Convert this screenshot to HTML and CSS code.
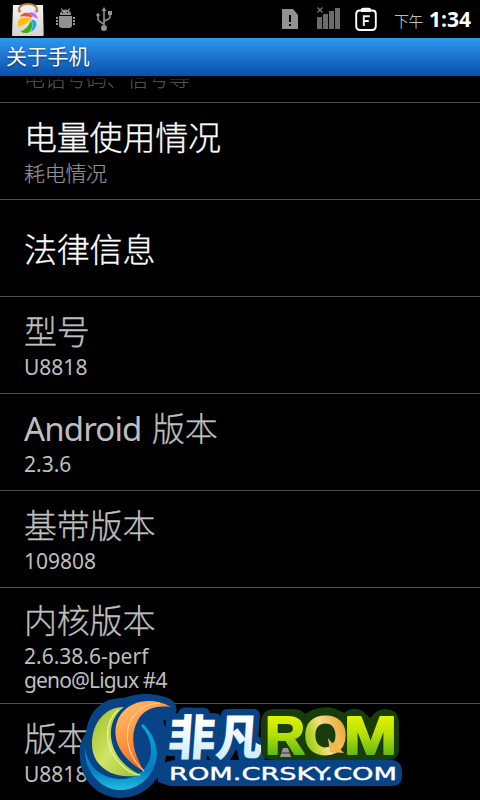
FILE: index.html
```html
<!DOCTYPE html>
<html lang="zh-CN">
<head>
<meta charset="utf-8">
<title>关于手机</title>
<link rel="stylesheet" href="styles.css">
</head>
<body>
<div class="phone">
  <header class="status">
    <svg class="status-icons" width="390" height="38" viewBox="0 0 390 38">
      <defs>
        <linearGradient id="bag" x1="0" y1="0" x2="0" y2="1"><stop offset="0" stop-color="#f2f2f2"/><stop offset="1" stop-color="#d4d4d2"/></linearGradient>
      </defs>
      <path d="M13 5h30l.7 30q-.1 1-1 1H13q-1 0-1-1z" fill="url(#bag)"/>
      <path d="M19 11C18 6 23 4 28 4s10 2 9 7" fill="none" stroke="#b77a4c" stroke-width="2"/>
      <circle cx="19.500" cy="11" r="1.800" fill="#b89078"/><circle cx="36.500" cy="11" r="1.800" fill="#b89078"/>
      <path d="M19.500 16.500Q24 11 29.500 13.500Q32 15 32 17.500Q26 15.500 19.500 16.500z" fill="#ff4b16"/>
      <path d="M29 12.500Q36 11 38 19Q33 16 30 15.500z" fill="#c46af2"/>
      <path d="M18 24Q17 18 24 17.500Q29 17.500 31 19Q27 24 18 27z" fill="#ffba13"/>
      <path d="M20.500 31.500Q28 29 31 20Q34 28 29 32.500Q24 34 20.500 31.500z" fill="#35b20b"/>
      <path d="M31.500 19.500Q37 20 36.500 25Q35 30 30.500 32Q34 27 31.500 19.500z" fill="#20a3f1"/>
      <g fill="#919191">
        <path d="M60 15v-1q0-2 2-3l-1-2 1-1 1 2q2.500-1 5 0l1-2 1 1-1 2q2 1 2 3v1z"/>
        <path d="M59 16h13v9q0 3-3 3h-7q-3 0-3-3z"/>
        <path d="M56 17h2v2h-2zm0 3h2v2h-2zm0 3h2v2h-2zm17-6h2v2h-2zm0 3h2v2h-2zm0 3h2v2h-2z"/>
      </g>
      <path d="M62 12h1v1h-1zm5 0h1v1h-1z" fill="#000"/>
      <g fill="none" stroke="#919191" stroke-width="1.600"><path d="M104 27V9M98 16v3q0 2 6 5M110 14v3q0 2-6 4"/></g>
      <path d="M101.500 11L104 7l2.500 4zM108 11h4v4h-4z" fill="#919191"/><circle cx="98" cy="15" r="1.700" fill="#919191"/><circle cx="104" cy="28" r="3" fill="#919191"/>
      <path d="M282 9h11l5 6v14h-16z" fill="#929292"/><path d="M289 15h2v7h-2zm0 9h2v2h-2z" fill="#000"/>
      <path d="M317 17h5v12h-5zm6-3h5v15h-5zm6-3h5v18h-5zm6-3h5v21h-5z" fill="#6b6b6b"/>
      <path d="M317.500 7.500l5 5m0-5l-5 5" stroke="#777" stroke-width="1.300"/>
      <path d="M359.500 10.500h2q0-1.700 2-1.700h5q2 0 2 1.700h2q3.300 0 3.300 3.500v12q0 4-4 4h-11.600q-4 0-4-4V14q0-3.500 3.300-3.500z" fill="none" stroke="#fff" stroke-width="1.900"/>
      <path d="M361 10.500h10" stroke="#fff" stroke-width="3"/>
      <path d="M363.800 26V16.200h6M363.800 21h5" fill="none" stroke="#f2f2f2" stroke-width="1.900"/>
    </svg>
    <div class="clock"><span class="ampm">下午</span><span class="time">1:34</span></div>
  </header>
  <h1 class="titlebar">关于手机</h1>
  <main class="list">
    <section class="row clipped"><p class="summary">电话号码、信号等</p></section>
    <section class="row active"><h2>电量使用情况</h2><p class="summary">耗电情况</p></section>
    <section class="row active single"><h2>法律信息</h2></section>
    <section class="row"><h2>型号</h2><p class="latin">U8818</p></section>
    <section class="row"><h2><span class="word">Android</span> 版本</h2><p class="latin">2.3.6</p></section>
    <section class="row"><h2>基带版本</h2><p class="latin">109808</p></section>
    <section class="row tall"><h2>内核版本</h2><p class="latin">2.6.38.6-perf<br><span class="builder">geno@Ligux #4</span></p></section>
    <section class="row last"><h2>版本</h2><p class="latin">U8818</p></section>
  </main>
  <svg class="watermark" width="340" height="110" viewBox="70 690 340 110">
    <defs>
      <linearGradient id="green" x1="0" y1="0" x2="1" y2="1"><stop offset="0" stop-color="#97bd21"/><stop offset=".5" stop-color="#d3e369"/><stop offset="1" stop-color="#8fc321"/></linearGradient>
      <linearGradient id="orange" x1="0" y1="0" x2=".6" y2="1"><stop offset="0" stop-color="#ffc578"/><stop offset=".45" stop-color="#ff9a42"/><stop offset="1" stop-color="#e8591c"/></linearGradient>
      <linearGradient id="cyan" x1="0" y1="0" x2="0" y2="1"><stop offset="0" stop-color="#08a6df"/><stop offset=".7" stop-color="#047ec2"/><stop offset="1" stop-color="#20bee0"/></linearGradient>
      <linearGradient id="ice" x1="0" y1="0" x2="0" y2="1"><stop offset=".3" stop-color="#fff"/><stop offset="1" stop-color="#c1e7fc"/></linearGradient>
      <linearGradient id="lime" gradientUnits="userSpaceOnUse" x1="0" y1="714" x2="0" y2="757"><stop offset="0" stop-color="#e8f500"/><stop offset=".5" stop-color="#b2df08"/><stop offset="1" stop-color="#57b516"/></linearGradient>
      <linearGradient id="gold" gradientUnits="userSpaceOnUse" x1="306" y1="740" x2="344" y2="728"><stop offset="0" stop-color="#93cf14"/><stop offset=".3" stop-color="#d8da4a"/><stop offset=".45" stop-color="#f9d98a"/><stop offset="1" stop-color="#edaa38"/></linearGradient>
    </defs>
    <path d="M86 733C88 712 102 697 124 698C141 691 161 694 172 700Q180 708 174 717L163 721C170 736 168 758 161 772C152 789 137 798 120 798C100 797 86 785 81 766C78 751 80 740 86 733z" fill="#084385"/>
    <path d="M174 760H392Q402 761 402 772V776Q402 786 391 786H170L158 782V764z" fill="#084385"/>
    <g class="name">
      <text transform="translate(167 755) skewX(-4)" textLength="95" lengthAdjust="spacingAndGlyphs">非凡</text>
    </g>
    <path d="M273 709H293Q301 709 305 714Q325 701 344 713Q354 705 364 712L370 718L376 712Q385 706 395 712Q399 716 399 723V750Q398 760 388 760H272Q261 759 261 748V722Q262 710 273 709z" fill="#193c0d"/>
    <path d="M143 724C151 731 160 747 156 761C151 781 134 791 119 790C99 789 84 770 85 748C87 765 100 778 119 779C138 780 151 766 151 751C151 739 146 731 141 726z" fill="url(#cyan)"/>
    <path d="M124 707C105 707 92 723 92 744C92 765 111 781 141 775C127 769 113 756 111 737C110 724 115 714 124 707z" fill="url(#green)"/>
    <path d="M118 710C103 724 103 751 126 769Q132 774 140 775" fill="none" stroke="#eef2a1" stroke-width="1.200"/>
    <path d="M171 707C153 697 132 700 121 714C109 731 116 757 144 771C132 751 130 735 138 720C144 709 156 705 171 707z" fill="url(#orange)"/>
    <path d="M160 703C137 704 124 722 128 744Q132 761 144 771" fill="none" stroke="#ffd2a0" stroke-width="1.100"/>
    <g class="rom"><text x="265" y="754" textLength="40" lengthAdjust="spacingAndGlyphs">R</text><text class="gold" x="304" y="754" textLength="43" lengthAdjust="spacingAndGlyphs">O</text><text x="344" y="754" textLength="53" lengthAdjust="spacingAndGlyphs">M</text></g>
    <path d="M328 738l4 5 8-3-2 7 6 6-14-1z" fill="#f0b74d"/>
    <path d="M283 748h5l3 9h-11z" fill="#989898"/><path d="M281 753h9" stroke="#333"/>
    <g class="site"><text x="169" y="779.500" textLength="228" lengthAdjust="spacingAndGlyphs">ROM.CRSKY.COM</text></g>
  </svg>
</div>
</body>
</html>
```
FILE: styles.css
```css
* { box-sizing: border-box; }
body { margin: 0; background: #000; }
.phone {
  position: relative;
  width: 480px;
  height: 800px;
  overflow: hidden;
  background: #000;
  color: #bebebe;
  font-family: "Noto Sans", "Noto Sans CJK SC", sans-serif;
  display: flex;
  flex-direction: column;
}
.status { height: 38px; flex: none; display: flex; }
.status-icons { flex: none; }
.clock { flex: 1; display: flex; align-items: baseline; padding-left: 4px; line-height: 38px; color: #fff; white-space: nowrap; }
.ampm { width: 35px; font-size: 15px; font-weight: 300; letter-spacing: -0.5px; color: #ddd; }
.time { font-family: "Open Sans", sans-serif; font-size: 21px; font-weight: 700; }
.titlebar {
  margin: 0;
  height: 38px;
  flex: none;
  padding-left: 6px;
  line-height: 37px;
  font-size: 21px;
  font-weight: 400;
  letter-spacing: -0.2px;
  color: #fff;
  text-shadow: 0 1px 2px #0008;
  background: linear-gradient(#2e98ee, #1b72cd 52%, #0751ac);
}
.list { flex: 1; overflow: hidden; }
.row { height: 97px; padding: 14px 24px 0; border-bottom: 1px solid #515151; }
.row h2 { margin: 0; height: 42px; line-height: 42px; font-size: 33px; font-weight: 300; letter-spacing: -0.2px; white-space: nowrap; -webkit-text-stroke: 0.3px currentColor; }
.row p { margin: 0; font-size: 21px; line-height: 24px; font-weight: 300; }
.row .summary { margin-top: 2px; color: #929292; letter-spacing: -0.3px; -webkit-text-stroke: 0.2px currentColor; }
.row .latin { font-weight: 400; margin-top: 2px; }
.active h2 { color: #fff; }
.row.single { padding-top: 29px; }
.row.tall { height: 116px; padding-top: 12px; }
.row.last { border: 0; }
.row.clipped { height: 27px; padding-top: 0; overflow: hidden; }
.row.clipped .summary { margin-top: -10px; color: #505050; -webkit-mask-image: linear-gradient(transparent 11px, #000 16px); mask-image: linear-gradient(transparent 11px, #000 16px); }
.word { display: inline-block; font-weight: 400; letter-spacing: -0.85px; margin-right: 2px; -webkit-text-stroke: 0; }
.builder { letter-spacing: -0.85px; }
.watermark { position: absolute; left: 70px; top: 690px; }
.watermark text { stroke-linejoin: round; }
.name { font: 900 48px "Noto Sans CJK SC", sans-serif; fill: url(#ice); stroke: #084385; stroke-width: 13px; paint-order: stroke; }
.rom { font: 700 54px "Liberation Sans", sans-serif; fill: url(#lime); stroke: url(#lime); stroke-width: 2px; }
.rom .gold { fill: url(#gold); stroke: url(#gold); }
.site { font: 400 18px "DejaVu Sans", sans-serif; fill: #fff; stroke: #fff; stroke-width: 0.4px; }
```
